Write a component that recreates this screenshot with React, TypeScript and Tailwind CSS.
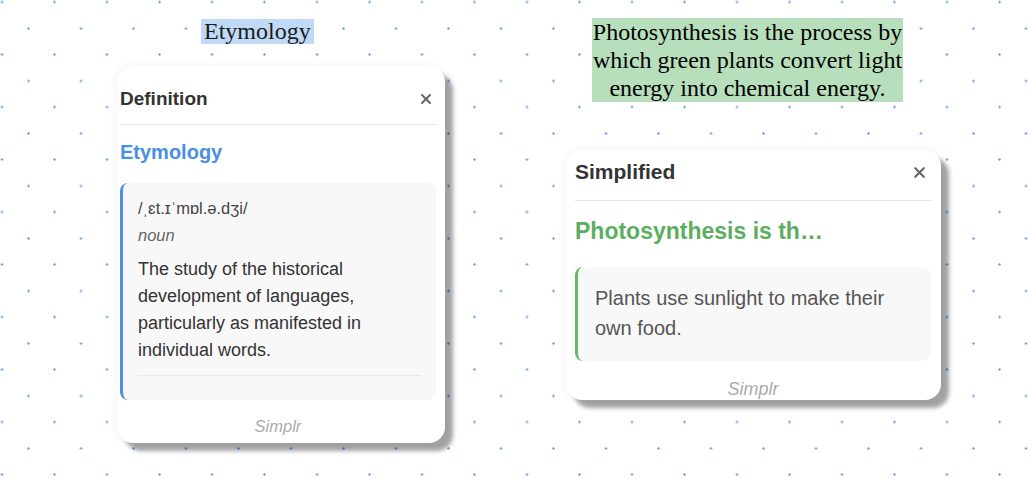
import { X } from "lucide-react";

const sans = { fontFamily: '"Liberation Sans", Arial, sans-serif' };

const App = () => {
  return (
    <div
      className="w-full h-[478px] overflow-hidden bg-white flex items-start gap-[121px] pl-[117px] [background-image:radial-gradient(circle,#6fa6f2_0.9px,transparent_1.5px),radial-gradient(circle,#6fa6f2_0.9px,transparent_1.5px)] [background-size:52.5px_52.5px] [background-position:-24.25px_-24.25px,2.25px_2.25px]"
      style={sans}
    >
      {/* definition column */}
      <div className="w-[328px] flex flex-col pt-[19px]">
        <span
          className="self-start ml-[84px] bg-[#bfd9f6] px-[3px] text-[24px] leading-[25px] text-[#1a1a1a]"
          style={{ fontFamily: '"Liberation Serif", "Times New Roman", serif' }}
        >
          Etymology
        </span>

        <div className="mt-[22px] bg-white rounded-[16px] shadow-[8px_8px_4px_rgba(0,0,0,0.36),0_0_10px_rgba(0,0,0,0.06)] pl-[3px] pr-[9px] pt-[20px] pb-[7px] flex flex-col">
          <div className="flex justify-between items-center h-[26px]">
            <p className="text-[19px] font-bold text-[#333]">Definition</p>
            <X size={16} strokeWidth={3} className="text-[#666] mr-[2px]" />
          </div>
          <div className="mt-[12px] border-t border-[#e6e6e6]" />

          <p className="mt-[15px] text-[20px] leading-[24px] font-bold text-[#4a90e2]">
            Etymology
          </p>

          <div className="mt-[19px] bg-[#f8f8f8] rounded-[8px] border-l-[3px] border-[#4a90e2] pl-[15px] pr-[15px] pt-[14px] pb-[24px]">
            <p className="text-[16.5px] leading-[22px] text-[#444]">/ˌɛt.ɪˈmɒl.ə.dʒi/</p>
            <p className="mt-[5px] text-[16.5px] leading-[22px] italic text-[#666]">noun</p>
            <p className="mt-[10px] text-[18px] leading-[27px] text-[#333]">
              The study of the historical development of languages, particularly as manifested in
              individual words.
            </p>
            <div className="mt-[11px] border-t border-dotted border-[#dcdcdc]" />
          </div>

          <p className="mt-[16px] text-center text-[16.5px] leading-[20px] italic text-[#aaa]">
            Simplr
          </p>
        </div>
      </div>

      {/* simplified column */}
      <div className="w-[375px] flex flex-col pt-[18px]">
        <div
          className="ml-[26px] w-[311px] bg-[#b7dfbb] text-center text-[24px] leading-[28px] text-black"
          style={{ fontFamily: '"Liberation Serif", "Times New Roman", serif' }}
        >
          Photosynthesis is the process by which green plants convert light energy into chemical
          energy.
        </div>

        <div className="mt-[48px] bg-white rounded-[16px] shadow-[8px_8px_4px_rgba(0,0,0,0.36),0_0_10px_rgba(0,0,0,0.06)] pl-[9px] pr-[10px] pt-[9px] flex flex-col h-[250px]">
          <div className="flex justify-between items-center h-[26px]">
            <p className="text-[21px] font-bold text-[#333]">Simplified</p>
            <X size={17} strokeWidth={3} className="text-[#666] mr-[3px]" />
          </div>
          <div className="mt-[15px] border-t border-[#e6e6e6]" />

          <p className="mt-[16px] text-[23px] leading-[28px] font-bold text-[#5cae5f] whitespace-nowrap">
            Photosynthesis is th…
          </p>

          <div className="mt-[22px] bg-[#f8f8f8] rounded-[8px] border-l-[3px] border-[#66b96a] pl-[17px] pr-[17px] pt-[16px] pb-[18px]">
            <p className="text-[20px] leading-[30px] text-[#555]">
              Plants use sunlight to make their own food.
            </p>
          </div>

          <p className="mt-[18px] text-center text-[18px] leading-[20px] italic text-[#aaa]">
            Simplr
          </p>
        </div>
      </div>
    </div>
  );
};

export default App;
